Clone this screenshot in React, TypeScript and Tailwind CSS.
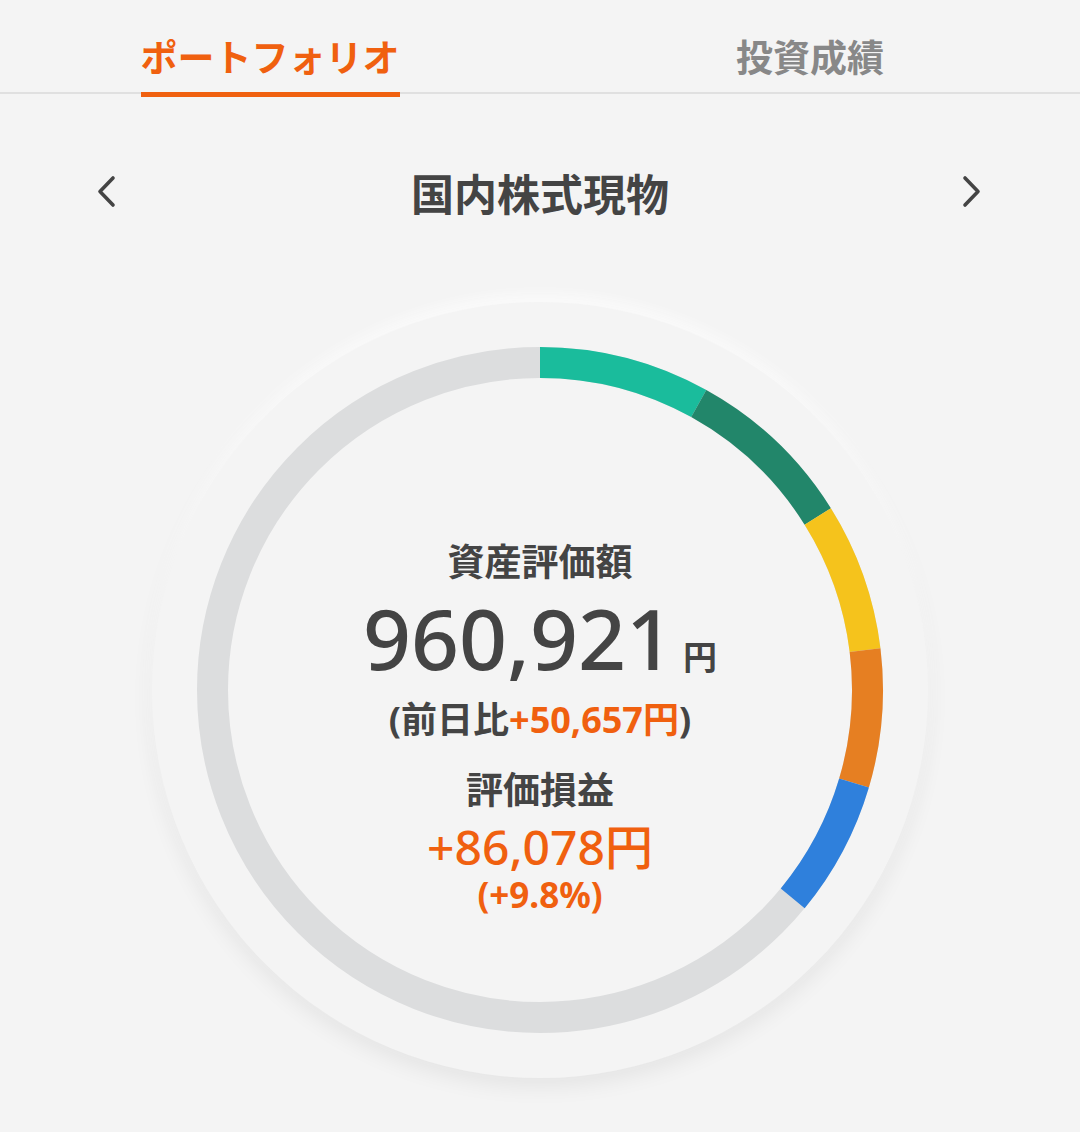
import React from "react";

const SIZE = 776;
const C = SIZE / 2;
const R = 327.5;
const SW = 31;

function pt(angle: number) {
  const a = (angle * Math.PI) / 180;
  return [C + R * Math.sin(a), C - R * Math.cos(a)];
}

function arc(a0: number, a1: number) {
  const [x0, y0] = pt(a0);
  const [x1, y1] = pt(a1);
  const large = a1 - a0 > 180 ? 1 : 0;
  return `M ${x0} ${y0} A ${R} ${R} 0 ${large} 1 ${x1} ${y1}`;
}

const segments = [
  { from: 0, to: 29, color: "#1abc9c" },
  { from: 29, to: 58, color: "#22866a" },
  { from: 58, to: 83, color: "#f5c31c" },
  { from: 83, to: 106.5, color: "#e67f22" },
  { from: 106.5, to: 129.5, color: "#2f80dc" },
];

function Ring() {
  return (
    <svg
      width={SIZE}
      height={SIZE}
      viewBox={`0 0 ${SIZE} ${SIZE}`}
      className="absolute inset-0"
    >
      <circle cx={C} cy={C} r={R} fill="none" stroke="#dcddde" strokeWidth={SW} />
      {segments.map((s, i) => (
        <path key={i} d={arc(s.from, s.to)} fill="none" stroke={s.color} strokeWidth={SW} />
      ))}
    </svg>
  );
}

export default function App() {
  return (
    <div className="min-h-[1132px] w-[1080px] bg-[#f4f4f4] font-['Noto_Sans','Noto_Sans_CJK_JP',sans-serif] text-[#444444] overflow-hidden">
      {/* Tabs */}
      <div className="flex border-b-2 border-[#e0e0e0]">
        <div className="flex-1 flex justify-center h-[92px]">
          <div className="relative h-full pt-[38px]">
            <span className="block text-[37px] leading-[36px] font-bold text-[#f0600f] font-['Noto_Sans_CJK_JP',sans-serif]">
              ポートフォリオ
            </span>
            <div className="absolute left-0 right-0 bottom-[-5px] h-[5px] bg-[#f0600f]" />
          </div>
        </div>
        <div className="flex-1 flex justify-center h-[92px]">
          <div className="relative h-full pt-[38px]">
            <span className="block text-[37px] leading-[36px] font-bold text-[#888888] font-['Noto_Sans_CJK_JP',sans-serif]">
              投資成績
            </span>
          </div>
        </div>
      </div>

      {/* Header */}
      <div className="mt-[68px] h-[60px] flex items-center justify-between px-[96px]">
        <svg width="24" height="36" viewBox="0 0 24 36" fill="none">
          <polyline
            points="17,4 4,17.5 17,31"
            stroke="#444444"
            strokeWidth="3.6"
            strokeLinecap="round"
            strokeLinejoin="round"
          />
        </svg>
        <span className="text-[43px] leading-[44px] font-bold font-['Noto_Sans_CJK_JP',sans-serif]">
          国内株式現物
        </span>
        <svg width="24" height="36" viewBox="0 0 24 36" fill="none">
          <polyline
            points="5,4 18,17.5 5,31"
            stroke="#444444"
            strokeWidth="3.6"
            strokeLinecap="round"
            strokeLinejoin="round"
          />
        </svg>
      </div>

      {/* Donut */}
      <div className="mt-[80px] flex justify-center">
        <div className="relative w-[776px] h-[776px] rounded-full bg-[#f4f4f4] shadow-[0_8px_22px_rgba(0,0,0,0.07),0_-6px_14px_rgba(255,255,255,0.95)]">
          <Ring />
          <div className="relative flex flex-col items-center pt-[240px]">
            <div className="h-[37px] text-[37px] leading-[37px] font-bold font-['Noto_Sans_CJK_JP',sans-serif]">
              資産評価額
            </div>
            <div className="mt-[18px] h-[82px] flex items-baseline">
              <span className="text-[84px] leading-[82px] font-medium">960,921</span>
              <span className="ml-[9px] text-[34px] leading-[34px] font-bold font-['Noto_Sans_CJK_JP',sans-serif]">円</span>
            </div>
            <div className="mt-[21px] h-[35px] flex items-baseline text-[36px] leading-[35px] font-bold">
              <span>(</span>
              <span className="font-['Noto_Sans_CJK_JP',sans-serif]">前日比</span>
              <span className="text-[#f0600f]">+50,657</span>
              <span className="text-[#f0600f] font-['Noto_Sans_CJK_JP',sans-serif]">円</span>
              <span>)</span>
            </div>
            <div className="mt-[35px] h-[37px] text-[37px] leading-[37px] font-bold font-['Noto_Sans_CJK_JP',sans-serif]">
              評価損益
            </div>
            <div className="mt-[13px] h-[48px] flex items-baseline text-[48px] leading-[48px] font-medium text-[#f0600f]">
              <span>+86,078</span>
              <span className="font-['Noto_Sans_CJK_JP',sans-serif]">円</span>
            </div>
            <div className="mt-[9px] h-[35px] text-[35px] leading-[35px] font-bold text-[#f0600f]">
              (+9.8%)
            </div>
          </div>
        </div>
      </div>
    </div>
  );
}
